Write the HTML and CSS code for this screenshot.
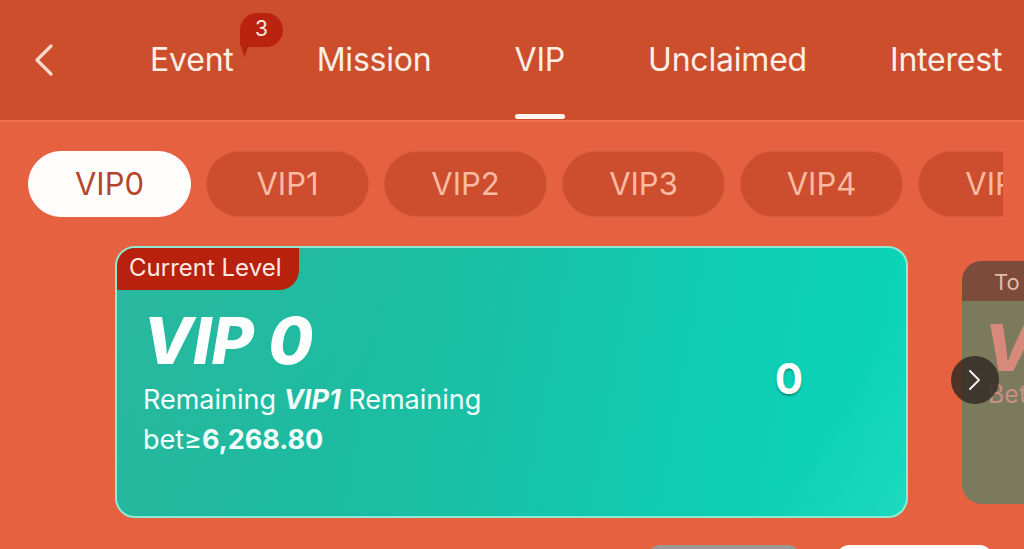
FILE: index.html
```html
<!DOCTYPE html>
<html lang="en">
<head>
    <meta charset="utf-8">
    <title>VIP</title>
    <link rel="stylesheet" href="styles.css">
</head>
<body>
    <div class="header">
        <a class="back" href="#">
            <svg width="22" height="34" viewBox="0 0 22 34"><path d="M19 3 L5 17 L19 31" fill="none" stroke="#f7d9cc" stroke-width="3.2" stroke-linecap="round" stroke-linejoin="round"/></svg>
        </a>
        <div class="tabs">
            <div class="tab">Event
                <span class="badge">3</span>
            </div>
            <div class="tab">Mission</div>
            <div class="tab active">VIP</div>
            <div class="tab">Unclaimed</div>
            <div class="tab">Interest</div>
        </div>
    </div>

    <div class="levels">
        <div class="level on">VIP0</div>
        <div class="level">VIP1</div>
        <div class="level">VIP2</div>
        <div class="level">VIP3</div>
        <div class="level">VIP4</div>
        <div class="level">VIP5</div>
    </div>

    <div class="cards">
        <div class="card">
            <div class="card-tag">Current Level</div>
            <div class="card-info">
                <div class="card-title">VIP 0</div>
                <div class="card-text">Remaining <b><i>VIP1</i></b> Remaining<br>bet≥<b>6,268.80</b></div>
            </div>
            <div class="card-num">0</div>
        </div>
        <div class="next-wrap">
            <div class="card next">
                <div class="next-head">To</div>
                <div class="next-title">V</div>
                <div class="next-text">Bet</div>
            </div>
            <span class="arrow">
                <svg width="16" height="24" viewBox="0 0 16 24"><path d="M3 3 L12 12 L3 21" fill="none" stroke="#f2ede6" stroke-width="2" stroke-linecap="round" stroke-linejoin="round"/></svg>
            </span>
        </div>
    </div>

    <div class="actions">
        <div class="btn gray"></div>
        <div class="btn white"></div>
    </div>
</body>
</html>
```

FILE: styles.css
```css
body {
    margin: 0;
    background: #e5613f;
    font-family: Inter, "Noto Sans", sans-serif;
    overflow: hidden;
    width: 1024px;
    height: 549px;
}

.header {
    height: 120px;
    background: #cc4e2d;
    border-bottom: 2px solid #ef6f4d;
    display: flex;
    align-items: center;
}

.back {
    display: block;
    margin-left: 32px;
    width: 22px;
    height: 34px;
}

.tabs {
    display: flex;
    gap: 83px;
    margin-left: 96px;
}

.tab {
    position: relative;
    color: #fdeee6;
    font-size: 32px;
    letter-spacing: -0.2px;
    line-height: 120px;
}

.tab.active::after {
    content: "";
    position: absolute;
    left: 0;
    right: 0;
    bottom: 1px;
    height: 5px;
    border-radius: 3px;
    background: #fff7f2;
}

.badge {
    position: absolute;
    left: 90px;
    top: 13px;
    width: 43px;
    height: 34px;
    background: #b9230f;
    border-radius: 17px 17px 17px 3px;
    color: #fbe7de;
    font-size: 21px;
    letter-spacing: 0;
    line-height: 32px;
    text-align: center;
}

.badge::after {
    content: "";
    position: absolute;
    left: -3px;
    bottom: -9px;
    border-left: 10px solid transparent;
    border-top: 14px solid #b9230f;
    transform: rotate(20deg);
}

.levels {
    display: flex;
    gap: 15px;
    margin: 29px 21px 0 28px;
    overflow: hidden;
}

.level {
    flex: none;
    width: 161px;
    height: 64px;
    border-radius: 33px;
    background: #cc4e2e;
    border: 1px solid #d45a3a;
    color: #fabba1;
    font-size: 31px;
    line-height: 64px;
    text-align: center;
}

.level.on {
    background: #fffdfb;
    border-color: #fffdfb;
    color: #b4452c;
}

.cards {
    display: flex;
    align-items: center;
    margin: 29px 0 0 115px;
    gap: 54px;
}

.card {
    position: relative;
    flex: none;
    width: 789px;
    height: 268px;
    border: 2px solid #8ee9d6;
    border-radius: 20px;
    background: linear-gradient(100deg, #22b59c 0%, #1bbea3 40%, #10cbb0 70%, #0bd6b9 100%);
    display: flex;
    align-items: center;
    overflow: hidden;
}

.card::before {
    content: "";
    position: absolute;
    left: 0;
    top: 0;
    right: 0;
    bottom: 0;
    background: linear-gradient(125deg, rgba(255,255,255,0.04) 0%, rgba(255,255,255,0) 35%, rgba(255,255,255,0) 85%, rgba(255,255,255,0.08) 100%);
}

.card-tag {
    position: absolute;
    left: -2px;
    top: -2px;
    height: 44px;
    padding: 0 18px 0 14px;
    background: #b8210e;
    border-radius: 20px 0 20px 0;
    color: #fde9e0;
    font-size: 24px;
    line-height: 44px;
}

.card-info {
    position: relative;
    flex: 1;
    padding: 0 0 0 26px;
    color: #f3fffb;
}

.card-title {
    font-size: 65px;
    font-weight: 800;
    font-style: italic;
    line-height: 74px;
    color: #fdfffe;
}

.card-text {
    font-size: 27px;
    line-height: 40px;
    margin-top: 2px;
}

.card-text b {
    font-weight: 700;
}

.card-num {
    position: relative;
    width: 234px;
    text-align: center;
    font-size: 42px;
    font-weight: 700;
    color: #fff;
    text-shadow: 0 2px 2px rgba(0,90,70,0.5);
    margin-top: -8px;
}

.next-wrap {
    position: relative;
}

.card.next {
    width: 200px;
    height: 243px;
    border: none;
    border-radius: 20px;
    background: #7c7a5d;
    display: block;
}

.card.next::before {
    display: none;
}

.next-head {
    height: 40px;
    background: #7c4b3b;
    color: #e4bca9;
    font-size: 22px;
    line-height: 42px;
    padding-left: 32px;
}

.next-title {
    color: #d78a7c;
    font-size: 64px;
    font-weight: 800;
    font-style: italic;
    line-height: 70px;
    padding-left: 22px;
    margin-top: 12px;
}

.next-text {
    color: #c69085;
    font-size: 25px;
    padding-left: 26px;
    margin-top: -4px;
}

.arrow {
    position: absolute;
    left: -11px;
    top: 95px;
    width: 48px;
    height: 48px;
    border-radius: 50%;
    background: rgba(48,40,34,0.82);
    display: flex;
    align-items: center;
    justify-content: center;
}

.actions {
    display: flex;
    gap: 37px;
    margin: 27px 0 0 648px;
}

.btn {
    width: 152px;
    height: 44px;
    border-radius: 12px;
}

.btn.gray {
    background: #9f9792;
}

.btn.white {
    width: 155px;
    background: #fffaf6;
}
```
